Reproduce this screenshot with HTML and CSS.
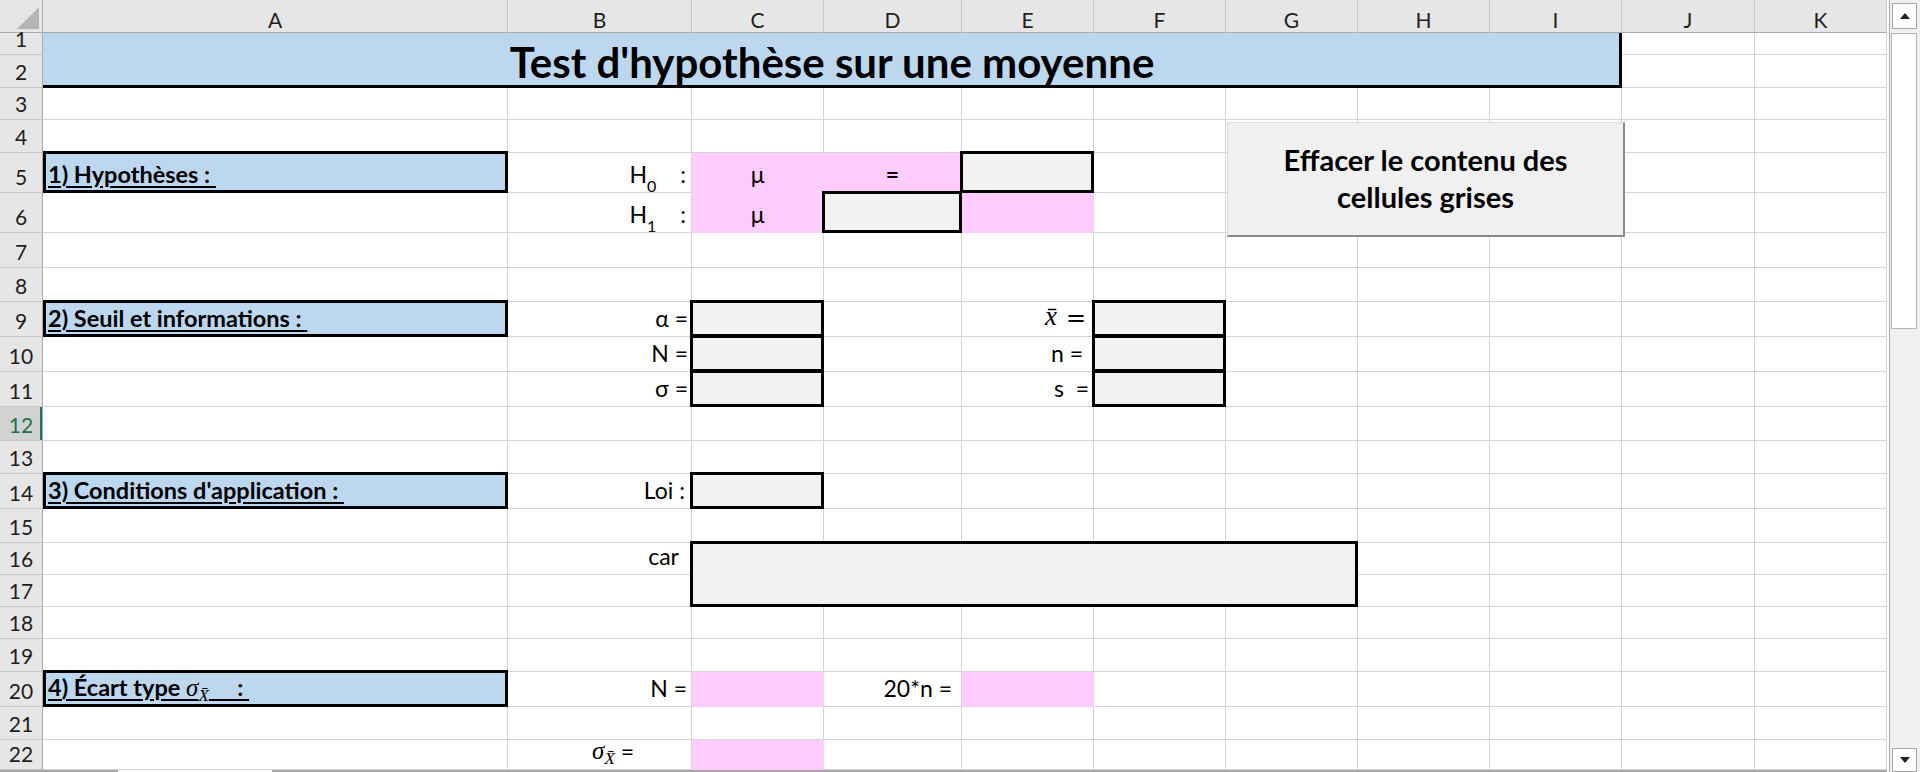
FILE: index.html
```html
<!DOCTYPE html>
<html lang="fr">
<head>
<meta charset="utf-8">
<title>Test d'hypothèse sur une moyenne</title>
<link rel="stylesheet" href="styles.css">
</head>
<body>
<div class="app">
  <div class="sheetwrap">
    <div class="grid">
      <!-- header -->
      <div class="corner"><svg width="42" height="32" viewBox="0 0 42 32"><polygon points="39,7 39,29 17,29" fill="#b4b4b4"/></svg></div>
      <div class="ch">A</div><div class="ch">B</div><div class="ch">C</div><div class="ch">D</div><div class="ch">E</div><div class="ch">F</div><div class="ch">G</div><div class="ch">H</div><div class="ch">I</div><div class="ch">J</div><div class="ch">K</div>
      <!-- 1 -->
      <div class="rh">1</div>
      <div class="title">Test d'hypothèse sur une moyenne</div>
      <div></div><div></div>
      <!-- 2 -->
      <div class="rh">2</div><div></div><div></div>
      <!-- 3 -->
      <div class="rh">3</div><div></div><div></div><div></div><div></div><div></div><div></div><div></div><div></div><div></div><div></div><div></div>
      <!-- 4 -->
      <div class="rh">4</div><div></div><div></div><div></div><div></div><div></div><div></div><div></div><div></div><div></div><div></div><div></div>
      <!-- 5 -->
      <div class="rh">5</div>
      <div class="sec bx"><span class="u">1) Hypothèses :&nbsp;</span></div>
      <div class="r pr5">H<sub class="sb">0</sub><span class="gap"></span>:</div>
      <div class="pink ctr">μ</div>
      <div class="pink ctr"><b>=</b></div>
      <div class="gray bx"></div>
      <div></div><div></div><div></div><div></div><div></div><div></div>
      <!-- 6 -->
      <div class="rh">6</div>
      <div></div>
      <div class="r pr5">H<sub class="sb">1</sub><span class="gap"></span>:</div>
      <div class="pink ctr">μ</div>
      <div class="gray bx"></div>
      <div class="pink"></div>
      <div></div><div></div><div></div><div></div><div></div><div></div>
      <!-- 7 -->
      <div class="rh">7</div><div></div><div></div><div></div><div></div><div></div><div></div><div></div><div></div><div></div><div></div><div></div>
      <!-- 8 -->
      <div class="rh">8</div><div></div><div></div><div></div><div></div><div></div><div></div><div></div><div></div><div></div><div></div><div></div>
      <!-- 9 -->
      <div class="rh">9</div>
      <div class="sec bx"><span class="u">2) Seuil et informations :&nbsp;</span></div>
      <div class="r">α =</div>
      <div class="gray bx"></div>
      <div></div>
      <div class="r pr7"><span class="m mx">x&#772;</span><span class="meq">=</span></div>
      <div class="gray bx"></div>
      <div></div><div></div><div></div><div></div><div></div>
      <!-- 10 -->
      <div class="rh">10</div>
      <div></div>
      <div class="r">N =</div>
      <div class="gray bx"></div>
      <div></div>
      <div class="r pr10">n =</div>
      <div class="gray bx"></div>
      <div></div><div></div><div></div><div></div><div></div>
      <!-- 11 -->
      <div class="rh">11</div>
      <div></div>
      <div class="r">σ =</div>
      <div class="gray bx"></div>
      <div></div>
      <div class="r pr4">s&nbsp;&nbsp;=</div>
      <div class="gray bx"></div>
      <div></div><div></div><div></div><div></div><div></div>
      <!-- 12 -->
      <div class="rh sel">12</div><div></div><div></div><div></div><div></div><div></div><div></div><div></div><div></div><div></div><div></div><div></div>
      <!-- 13 -->
      <div class="rh">13</div><div></div><div></div><div></div><div></div><div></div><div></div><div></div><div></div><div></div><div></div><div></div>
      <!-- 14 -->
      <div class="rh">14</div>
      <div class="sec bx"><span class="u">3) Conditions d'application :&nbsp;</span></div>
      <div class="r pr6">Loi :</div>
      <div class="gray bx"></div>
      <div></div><div></div><div></div><div></div><div></div><div></div><div></div><div></div>
      <!-- 15 -->
      <div class="rh">15</div><div></div><div></div><div></div><div></div><div></div><div></div><div></div><div></div><div></div><div></div><div></div>
      <!-- 16 -->
      <div class="rh">16</div>
      <div></div>
      <div class="r pr12">car</div>
      <div class="gray bx big"></div>
      <div></div><div></div><div></div><div></div>
      <!-- 17 -->
      <div class="rh">17</div>
      <div></div><div></div>
      <div></div><div></div><div></div><div></div>
      <!-- 18 -->
      <div class="rh">18</div><div></div><div></div><div></div><div></div><div></div><div></div><div></div><div></div><div></div><div></div><div></div>
      <!-- 19 -->
      <div class="rh">19</div><div></div><div></div><div></div><div></div><div></div><div></div><div></div><div></div><div></div><div></div><div></div>
      <!-- 20 -->
      <div class="rh">20</div>
      <div class="sec bx"><span class="u">4) Écart type <span class="m">σ<sub class="ms">X&#772;</sub></span>&nbsp;&nbsp;&nbsp;&nbsp;&nbsp;:&nbsp;</span></div>
      <div class="r pr4">N =</div>
      <div class="pink"></div>
      <div class="r pr9">20*n =</div>
      <div class="pink"></div>
      <div></div><div></div><div></div><div></div><div></div><div></div>
      <!-- 21 -->
      <div class="rh">21</div><div></div><div></div><div></div><div></div><div></div><div></div><div></div><div></div><div></div><div></div><div></div>
      <!-- 22 -->
      <div class="rh">22</div>
      <div></div>
      <div class="r pr57"><span class="m">σ<sub class="ms">X&#772;</sub></span>&nbsp;=</div>
      <div class="pink"></div>
      <div></div><div></div><div></div><div></div><div></div><div></div><div></div><div></div>
    </div>
    <div class="bottomline"><span class="seg a"></span><span class="seg gapseg"></span><span class="seg b"></span></div>
    <div class="btn">Effacer le contenu des<br>cellules grises</div>
  </div>
  <div class="vscroll">
    <div class="track">
      <div class="sbtn up"><svg width="10" height="6" viewBox="0 0 10 6"><polygon points="5,0 10,6 0,6" fill="#222"/></svg></div>
      <div class="thumb"></div>
      <div class="sbtn down"><svg width="10" height="6" viewBox="0 0 10 6"><polygon points="0,0 10,0 5,6" fill="#222"/></svg></div>
    </div>
  </div>
</div>
</body>
</html>
```
FILE: styles.css
```css
* { box-sizing: border-box; }
html, body { margin: 0; padding: 0; }
body {
  background: #fff;
  color: #000;
  font-family: Lato, "Liberation Sans", "DejaVu Sans", sans-serif;
  overflow: hidden;
}
.app { display: flex; width: 1920px; height: 772px; }

.sheetwrap {
  position: relative;
  width: 1887px;
  height: 772px;
  display: flex;
  flex-direction: column;
}

.grid {
  display: grid;
  grid-template-columns: 43px 465px 184px 132px 138px 132px 132px 132px 132px 132px 133px 132px;
  grid-template-rows: 33px 22px 33px 32px 33px 40px 40px 35px 34px 35px 35px 35px 34px 33px 35px 34px 32px 32px 32px 33px 35px 33px 30px;
  height: 770px;
}

.grid > div {
  position: relative;
  display: flex;
  align-items: flex-end;
  min-width: 0;
  padding: 0 4px 6px 4px;
  border-right: 1px solid #d4d4d4;
  border-bottom: 1px solid #d4d4d4;
  font-size: 23px;
  line-height: 1;
  white-space: nowrap;
}

/* headers */
.grid > .corner {
  padding: 0;
  align-items: stretch;
  background: #e6e6e6;
  border-right: 1px solid #ababab;
  border-bottom: 1px solid #ababab;
}
.grid > .ch {
  background: #e6e6e6;
  border-right-color: #c6c6c6;
  border-bottom-color: #ababab;
  justify-content: center;
  padding-bottom: 2px;
  font-size: 21px;
  color: #1e1e1e;
}
.grid > .rh {
  background: #e6e6e6;
  border-right-color: #ababab;
  border-bottom-color: #c6c6c6;
  justify-content: center;
  padding: 0 0 5px 0;
  font-size: 21px;
  color: #1e1e1e;
}
.grid > .rh.sel {
  background: #d2d2d2;
  color: #217346;
  box-shadow: inset -2px 0 0 #217346;
}

/* title */
.grid > .title {
  grid-column: span 9;
  grid-row: span 2;
  background: #bdd7ee;
  border-color: #bdd7ee;
  justify-content: center;
  align-items: center;
  padding: 4px 0 0 0;
  font-size: 42px;
  font-weight: 700;
}
.grid > .title::after {
  content: "";
  position: absolute;
  left: 0; top: 0; right: -1px; bottom: -1px;
  border-right: 3px solid #000;
  border-bottom: 3px solid #000;
  z-index: 1;
  pointer-events: none;
}

/* thick boxes */
.grid > .bx::after {
  content: "";
  position: absolute;
  left: -2px; top: -2px; right: -1px; bottom: -1px;
  border: 3px solid #000;
  z-index: 1;
  pointer-events: none;
}
.grid > .sec::after { left: 0; }

.grid > .sec {
  background: #bdd7ee;
  font-weight: 700;
  font-size: 23.5px;
  padding-left: 5px;
}
.u {
  text-decoration: underline;
  text-decoration-thickness: 2px;
  text-underline-offset: 3px;
}
.grid > .gray { background: #f2f2f2; }
.grid > .big { grid-column: span 5; grid-row: span 2; }
.grid > .pink { background: #ffccff; border-color: #ffccff; }

.grid > .r { justify-content: flex-end; padding-right: 3px; }
.grid > .ctr { justify-content: center; }
.grid > .pr4 { padding-right: 4px; }
.grid > .pr5 { padding-right: 5px; }
.grid > .pr6 { padding-right: 6px; }
.grid > .pr7 { padding-right: 7px; }
.grid > .pr9 { padding-right: 9px; }
.grid > .pr10 { padding-right: 10px; }
.grid > .pr12 { padding-right: 12px; }
.grid > .pr57 { padding-right: 57px; }

.sb {
  font-size: 16px;
  vertical-align: -4px;
  line-height: 0;
}
.gap { display: inline-block; width: 24px; }

.m {
  font-family: "Liberation Serif", "DejaVu Serif", serif;
  font-style: italic;
  font-weight: 400;
  font-size: 25px;
}
.mx { font-size: 27px; }
.ms {
  font-size: 17px;
  vertical-align: -5px;
  line-height: 0;
}
.meq {
  font-family: "DejaVu Serif", "Liberation Serif", serif;
  font-size: 24px;
  margin-left: 9px;
}

/* bottom edge */
.bottomline { display: flex; height: 2px; }
.seg { display: block; height: 2px; }
.seg.a { width: 118px; background: #a6a6a6; }
.seg.gapseg { width: 154px; background: #fff; }
.seg.b { flex: 1; background: #a6a6a6; }

/* floating button */
.btn {
  position: absolute;
  left: 1227px;
  top: 122px;
  width: 398px;
  height: 115px;
  z-index: 5;
  background: #f0f0f0;
  border-top: 1px solid #dcdcdc;
  border-left: 1px solid #dcdcdc;
  border-right: 2px solid #8a8a8a;
  border-bottom: 2px solid #8a8a8a;
  display: flex;
  align-items: center;
  justify-content: center;
  text-align: center;
  font-weight: 700;
  font-size: 29px;
  line-height: 37px;
  padding-bottom: 2px;
}

/* scrollbar */
.vscroll {
  width: 33px;
  height: 772px;
  padding-left: 2px;
  background: #fff;
  display: flex;
}
.track {
  flex: 1;
  border-left: 1px solid #ababab;
  background: #f0f0f0;
  display: flex;
  flex-direction: column;
  padding: 3px 0 0 2px;
}
.sbtn {
  width: 25px;
  height: 26px;
  background: #fff;
  border: 1px solid #a6a6a6;
  display: flex;
  align-items: center;
  justify-content: center;
}
.sbtn.down { margin-top: auto; height: 24px; }
.thumb {
  margin-top: 4px;
  margin-left: -1px;
  width: 26px;
  height: 296px;
  background: #fff;
  border: 1px solid #b4b4b4;
}
```
